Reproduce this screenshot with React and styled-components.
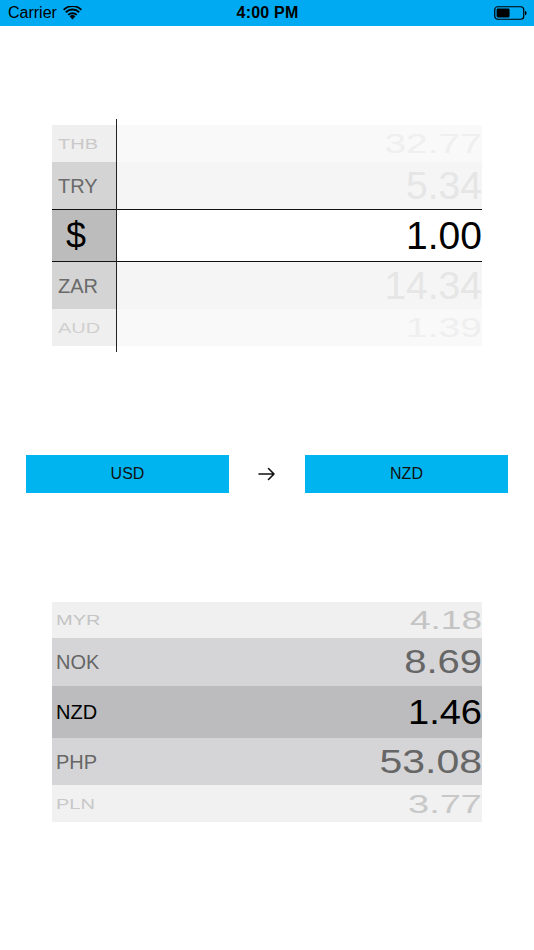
import React from "react";
import styled, { createGlobalStyle } from "styled-components";

const Global = createGlobalStyle`
  html, body { margin: 0; padding: 0; background: #ffffff; }
  body { font-family: "Liberation Sans", Arial, sans-serif; }
  * { box-sizing: border-box; }
`;

const Page = styled.div`
  width: 534px;
  height: 950px;
  display: flex;
  flex-direction: column;
  align-items: center;
  background: #fff;
  overflow: hidden;
`;

const StatusBar = styled.div`
  width: 100%;
  height: 26px;
  background: #00aaf3;
  display: grid;
  grid-template-columns: 1fr auto 1fr;
  align-items: center;
  padding: 0 7px 0 8px;
  color: #000;
  font-size: 16px;
`;

const Carrier = styled.div`
  display: flex;
  align-items: center;
  gap: 6px;
`;

const Clock = styled.div`
  font-weight: 700;
  font-size: 16px;
  letter-spacing: 0.2px;
`;

const BatteryWrap = styled.div`
  justify-self: end;
  display: flex;
  align-items: center;
`;

const TopPicker = styled.div`
  margin-top: 93px;
  width: 430px;
  display: grid;
  grid-template-columns: 64px 1px 1fr;
  grid-template-rows: 6px 37px 47px 53px 47px 37px 6px;
`;

const Divider = styled.div`
  grid-column: 2;
  grid-row: 1 / -1;
  background: #222;
`;

const LabelCell = styled.div`
  grid-column: 1;
  grid-row: ${(p) => p.$row};
  background: ${(p) => p.$bg};
  color: ${(p) => p.$color};
  display: flex;
  align-items: center;
  padding-left: ${(p) => (p.$selected ? "14px" : "6px")};
  font-size: ${(p) => (p.$selected ? "36px" : "20px")};
  border-top: ${(p) => (p.$selected ? "1.5px solid #111" : "none")};
  border-bottom: ${(p) => (p.$selected ? "1.5px solid #111" : "none")};
`;

const ValueCell = styled.div`
  grid-column: 3;
  grid-row: ${(p) => p.$row};
  background: ${(p) => p.$bg};
  color: ${(p) => p.$color};
  display: flex;
  align-items: center;
  justify-content: flex-end;
  font-size: 39px;
  border-top: ${(p) => (p.$selected ? "1.5px solid #111" : "none")};
  border-bottom: ${(p) => (p.$selected ? "1.5px solid #111" : "none")};
`;

const Squish = styled.span`
  display: inline-block;
  transform: scaleY(${(p) => p.$sy || 1});
  transform-origin: center;
  line-height: 1;
`;

const ButtonRow = styled.div`
  margin-top: 103px;
  width: 100%;
  padding: 0 26px;
  display: flex;
  align-items: center;
  justify-content: space-between;
`;

const CurrencyButton = styled.button`
  width: 203px;
  height: 38px;
  border: none;
  background: #00b5ef;
  color: #111;
  font-family: "Liberation Sans", Arial, sans-serif;
  font-size: 16px;
  padding: 0;
`;

const Arrow = styled.div`
  width: 76px;
  display: flex;
  align-items: center;
  justify-content: center;
`;

const BottomPicker = styled.div`
  margin-top: 109px;
  width: 430px;
  display: flex;
  flex-direction: column;
`;

const BottomRow = styled.div`
  height: ${(p) => p.$h}px;
  background: ${(p) => p.$bg};
  color: ${(p) => p.$color};
  display: flex;
  align-items: center;
  justify-content: space-between;
  padding: 0 0 0 4px;
`;

const BottomLabel = styled.span`
  font-size: 20px;
  display: inline-block;
  transform: scaleY(${(p) => p.$sy || 1});
  line-height: 1;
`;

const BottomValue = styled.span`
  font-size: ${(p) => p.$size}px;
  display: inline-block;
  transform: scaleY(${(p) => p.$vy || 1});
  line-height: 1;
`;

const topRows = [
  { label: "THB", value: "32.77", lbg: "#efefef", vbg: "#f9f9f9", lc: "#c9c9c9", vc: "#efefef", sy: 0.7 },
  { label: "TRY", value: "5.34", lbg: "#d4d4d4", vbg: "#f5f5f5", lc: "#6a6a6a", vc: "#e6e6e6", sy: 1 },
  { label: "$", value: "1.00", lbg: "#bcbcbc", vbg: "#ffffff", lc: "#000", vc: "#000", sy: 1, selected: true },
  { label: "ZAR", value: "14.34", lbg: "#d4d4d4", vbg: "#f5f5f5", lc: "#6a6a6a", vc: "#e6e6e6", sy: 1 },
  { label: "AUD", value: "1.39", lbg: "#efefef", vbg: "#f9f9f9", lc: "#cfcfcf", vc: "#efefef", sy: 0.7 },
];

const bottomRows = [
  { label: "MYR", value: "4.18", h: 36, bg: "#f0f0f0", c: "#c4c4c4", size: 37, sy: 0.7, vy: 0.7 },
  { label: "NOK", value: "8.69", h: 48, bg: "#d5d5d7", c: "#666666", size: 40, sy: 1, vy: 0.82 },
  { label: "NZD", value: "1.46", h: 52, bg: "#bcbcbe", c: "#000000", size: 38, sy: 1, vy: 0.92 },
  { label: "PHP", value: "53.08", h: 47, bg: "#d5d5d7", c: "#666666", size: 41, sy: 1, vy: 0.82 },
  { label: "PLN", value: "3.77", h: 37, bg: "#f1f1f1", c: "#c8c8c8", size: 38, sy: 0.7, vy: 0.7 },
];

function Wifi() {
  return (
    <svg width="19" height="14" viewBox="0 0 19 14">
      <path d="M9.5 13.5 L6.6 10.3 A4.2 4.2 0 0 1 12.4 10.3 Z" fill="#000" />
      <path d="M4.6 8.2 A7 7 0 0 1 14.4 8.2 L13.1 9.6 A5.2 5.2 0 0 0 5.9 9.6 Z" fill="#000" />
      <path d="M2.2 5.6 A10.4 10.4 0 0 1 16.8 5.6 L15.5 7 A8.6 8.6 0 0 0 3.5 7 Z" fill="#000" />
      <path d="M0 3.2 A13.6 13.6 0 0 1 19 3.2 L17.8 4.5 A11.8 11.8 0 0 0 1.2 4.5 Z" fill="#000" />
    </svg>
  );
}

function Battery() {
  return (
    <svg width="33" height="14" viewBox="0 0 33 14">
      <rect x="0.75" y="0.75" width="29" height="12.5" rx="3" ry="3" fill="none" stroke="#000" strokeWidth="1.2" />
      <rect x="2.6" y="2.6" width="13" height="8.8" rx="1.3" fill="#000" />
      <path d="M31 4.8 Q32.6 5.2 32.6 7 Q32.6 8.8 31 9.2 Z" fill="#000" />
    </svg>
  );
}

function ArrowIcon() {
  return (
    <svg width="18" height="14" viewBox="0 0 18 14">
      <path d="M1 7 H16 M10.5 1.5 L16 7 L10.5 12.5" fill="none" stroke="#111" strokeWidth="1.6" strokeLinecap="round" strokeLinejoin="round" />
    </svg>
  );
}

export default function App() {
  return (
    <>
      <Global />
      <Page>
        <StatusBar>
          <Carrier>
            <span>Carrier</span>
            <Wifi />
          </Carrier>
          <Clock>4:00 PM</Clock>
          <BatteryWrap>
            <Battery />
          </BatteryWrap>
        </StatusBar>

        <TopPicker>
          <Divider />
          {topRows.map((r, i) => (
            <React.Fragment key={r.label}>
              <LabelCell $row={i + 2} $bg={r.lbg} $color={r.lc} $selected={r.selected}>
                <Squish $sy={r.sy}>{r.label}</Squish>
              </LabelCell>
              <ValueCell $row={i + 2} $bg={r.vbg} $color={r.vc} $selected={r.selected}>
                <Squish $sy={r.sy}>{r.value}</Squish>
              </ValueCell>
            </React.Fragment>
          ))}
        </TopPicker>

        <ButtonRow>
          <CurrencyButton>USD</CurrencyButton>
          <Arrow>
            <ArrowIcon />
          </Arrow>
          <CurrencyButton>NZD</CurrencyButton>
        </ButtonRow>

        <BottomPicker>
          {bottomRows.map((r) => (
            <BottomRow key={r.label} $h={r.h} $bg={r.bg} $color={r.c}>
              <BottomLabel $sy={r.sy}>{r.label}</BottomLabel>
              <BottomValue $size={r.size} $vy={r.vy}>{r.value}</BottomValue>
            </BottomRow>
          ))}
        </BottomPicker>
      </Page>
    </>
  );
}
